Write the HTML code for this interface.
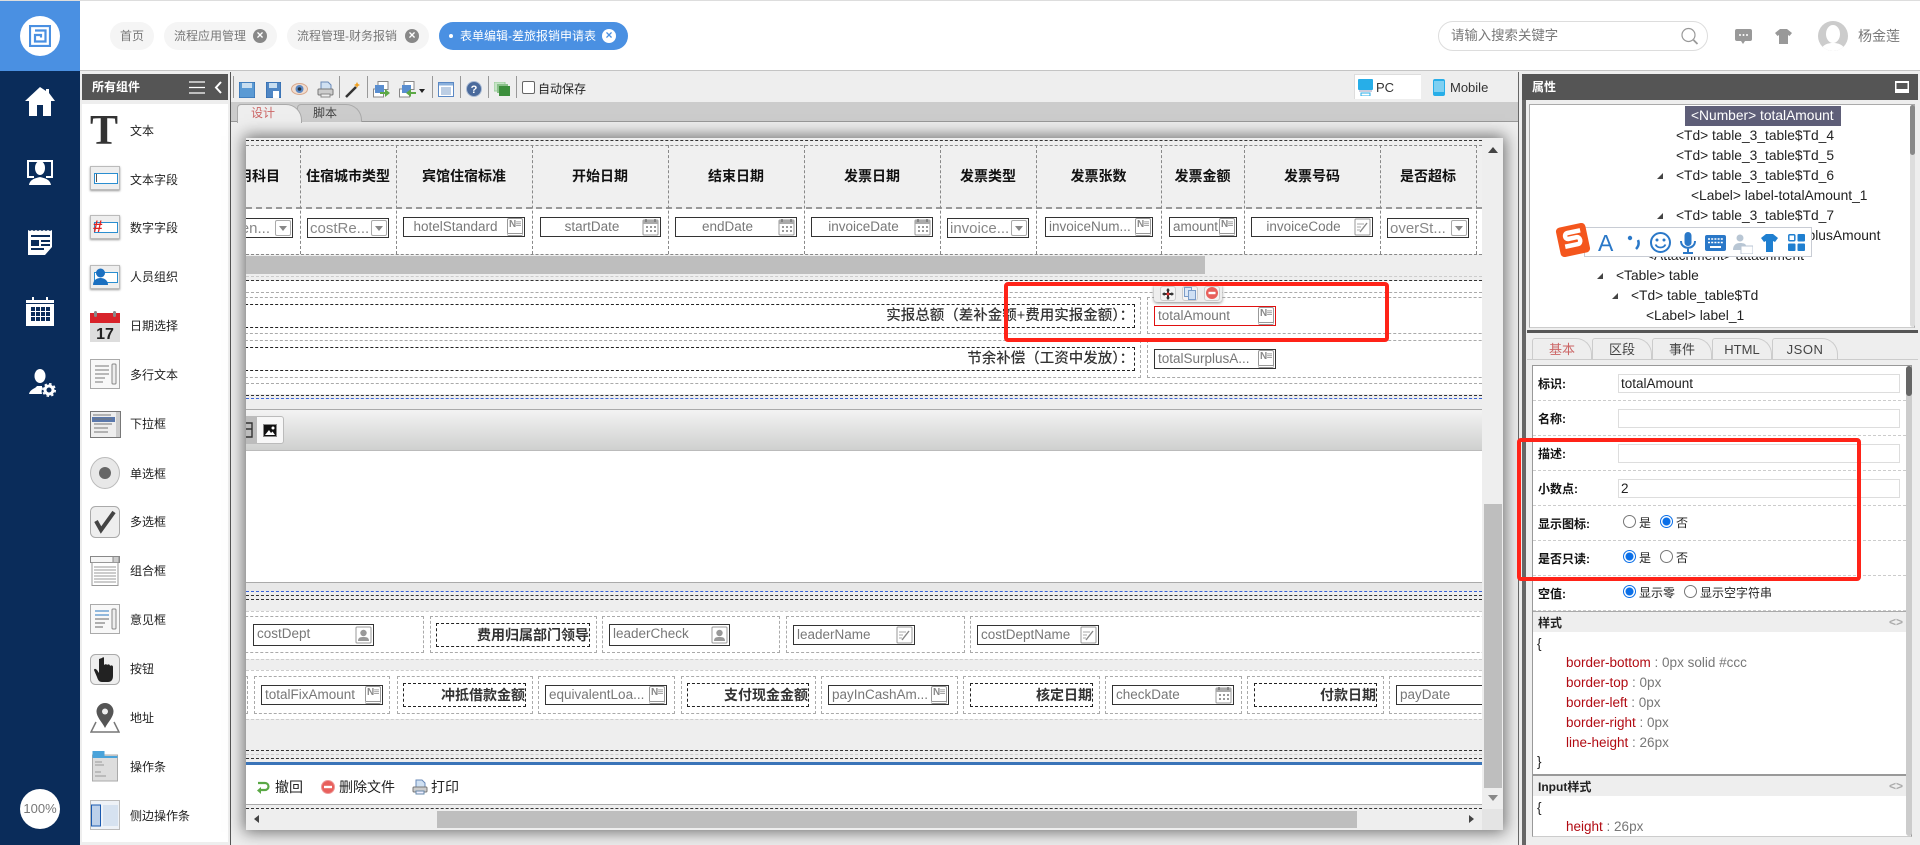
<!DOCTYPE html>
<html lang="zh"><head><meta charset="utf-8"><title>表单编辑</title>
<style>
*{box-sizing:border-box}
html,body{margin:0;padding:0}
body{width:1920px;height:845px;overflow:hidden;background:#eee;position:relative;font-family:"Liberation Sans","Noto Sans CJK SC",sans-serif;font-size:12px;color:#333}
div,span,svg,i,b{position:absolute}
i,b{font-style:normal}
span.r{position:static}
.tab{top:22px;height:28px;background:#f5f5f5;border-radius:14px;color:#777;line-height:28px;font-size:12px;white-space:nowrap}
.x{top:7px;width:14px;height:14px;border-radius:50%;background:#888;color:#fff;font-size:12px;font-weight:bold;line-height:13px;text-align:center}
.li{left:130px;font-size:12px;color:#222;line-height:16px;white-space:nowrap}
.ic{left:90px}
.hd{top:145px;height:63px;line-height:63px;text-align:center;font-weight:bold;font-size:14px;color:#111;white-space:nowrap}
.v{top:145px;height:109px;width:0;border-left:1px dashed #888}
.h{left:246px;width:1236px;height:0;border-top:1px dashed #333}
.g{border-top-color:#aaa}.l{border-top-color:#ccc}.b{border-top-color:#3a63d8}
.t{border:1px dashed #aaa;background:#fff}
.lb{border:1px dashed #222;background:#fff;text-align:right;font-weight:bold;font-size:14px;color:#333;white-space:nowrap;overflow:hidden}
.w{font-size:14.5px;font-weight:500}
.fi{border:1px solid #333;background:#fff;color:#777;font-size:13.5px;line-height:17px;white-space:nowrap;overflow:hidden;padding-left:3px;height:20px}
.c{text-align:center;padding-right:20px}
.sel{font-size:15px;top:218px;height:20px;line-height:19px;padding-left:2px;color:#888}
.sb{right:1px;top:1px;width:16px;height:16px;border:1px solid #aaa;border-radius:2px;background:#fff}
.sb:after{content:"";position:absolute;left:3px;top:5px;border:4px solid transparent;border-top:5px solid #888}
.ne{right:1px;top:0;width:16px;height:18px;border:1px solid #999;border-radius:2px;background:#fff;color:#888;font-size:10px;line-height:12px;text-align:left;padding-left:1px;letter-spacing:-.6px;font-weight:bold;border-bottom:3px double #999;overflow:hidden}
.ci{right:1px;top:0;width:17px;height:18px}
.tr{font-size:13.8px;line-height:20px;white-space:nowrap;color:#222}
.ar{width:6px;height:6px;background:#444;clip-path:polygon(100% 0,100% 100%,0 100%)}
.ptab{top:338px;height:21px;width:60px;border:1px solid #ccc;border-bottom:none;border-radius:3px 16px 0 0;background:#eee;text-align:center;line-height:21px;font-size:13px;color:#444}
.pl{left:1538px;font-weight:bold;font-size:12px;line-height:16px;color:#111;white-space:nowrap;margin-top:1px}
.pi{left:1618px;width:282px;height:19px;border:1px solid #ddd;background:#fff;font-size:13.5px;line-height:17px;padding-left:2px;color:#222}
.pd{left:1533px;width:373px;height:0;border-top:1px dashed #ccc}
.rd{width:13px;height:13px;border-radius:50%;border:1px solid #777;background:#fff}
.rd.on{border:1px solid #0a6fe8;background:radial-gradient(circle,#0a6fe8 0,#0a6fe8 3.6px,#fff 4.4px)}
.rt{font-size:12px;line-height:16px;color:#222;white-space:nowrap}
.cd{left:1566px;font-size:13.5px;line-height:20px;color:#b10a12;white-space:nowrap}
.cd em{font-style:normal;color:#777}
.br{left:1537px;font-size:13.5px;line-height:20px;color:#222}
.sp{top:76px;height:22px;width:1px;background:#999}
.rb{border:4px solid #ff2318;border-radius:4px;z-index:30}
</style></head><body>
<svg width="0" height="0" style="position:absolute"><defs>
<symbol id="cal" viewBox="0 0 17 18"><rect x="1" y="2" width="15" height="15" rx="1" fill="#fff" stroke="#999"/><rect x="1" y="2" width="15" height="4" fill="#aaa"/><path d="M4 1v3M13 1v3" stroke="#777" stroke-width="1.5"/><path d="M4 8h2v2H4zM8 8h2v2H8zM12 8h2v2h-2zM4 12h2v2H4zM8 12h2v2H8zM12 12h2v2h-2z" fill="#999"/></symbol>
<symbol id="ed" viewBox="0 0 17 18"><rect x="1" y="1" width="15" height="16" rx="1" fill="#fff" stroke="#999"/><path d="M3 6h7M3 9h4M3 12h3" stroke="#aaa"/><path d="M6 14l7-9" stroke="#888" stroke-width="1.4"/></symbol>
<symbol id="us" viewBox="0 0 17 18"><rect x="1" y="1" width="15" height="16" rx="1" fill="#fff" stroke="#999"/><circle cx="8.5" cy="7" r="3.2" fill="#999"/><path d="M3 15c0-4 3-4 5.5-4s5.500 0 5.500 4z" fill="#999"/></symbol>
</defs></svg>

<!-- top header -->
<div style="left:0;top:0;width:1920px;height:1px;background:#ddd"></div>
<div style="left:80px;top:1px;width:1840px;height:70px;background:#fff;border-bottom:1px solid #c4c4c4"></div>
<div class="tab" style="left:110px;width:44px;text-align:center">首页</div>
<div class="tab" style="left:164px;width:113px;padding-left:10px">流程应用管理<i class="x" style="right:10px">×</i></div>
<div class="tab" style="left:287px;width:142px;padding-left:10px">流程管理-财务报销<i class="x" style="right:10px">×</i></div>
<div class="tab" style="left:439px;width:189px;padding-left:21px;background:#4a90e2;color:#fff">表单编辑-差旅报销申请表<i style="left:10px;top:12px;width:4px;height:4px;background:#fff;border-radius:50%"></i><i class="x" style="right:12px;background:#fff;color:#4a90e2">×</i></div>
<div style="left:1438px;top:21px;width:270px;height:30px;border:1px solid #ddd;border-radius:15px;background:#fff;color:#777;font-size:13.4px;line-height:27px;padding-left:12px">请输入搜索关键字</div>
<svg style="left:1680px;top:27px" width="20" height="19" viewBox="0 0 20 19"><circle cx="8.500" cy="8" r="6.500" fill="none" stroke="#999" stroke-width="1.2"/><path d="M13.500 13l4 4" stroke="#999" stroke-width="1.8"/></svg>
<svg style="left:1735px;top:29px" width="17" height="15" viewBox="0 0 17 15"><path d="M2 0h13a2 2 0 0 1 2 2v8a2 2 0 0 1-2 2H10l-2 3-2-3H2a2 2 0 0 1-2-2V2a2 2 0 0 1 2-2z" fill="#999"/><circle cx="5" cy="6" r="1" fill="#fff"/><circle cx="8.500" cy="6" r="1" fill="#fff"/><circle cx="12" cy="6" r="1" fill="#fff"/></svg>
<svg style="left:1775px;top:29px" width="17" height="15" viewBox="0 0 17 15"><path d="M5 0h7l5 4-2.500 3L13 6v9H4V6L2.500 7 0 4z" fill="#999"/></svg>
<div style="left:1818px;top:21px;width:30px;height:30px;border-radius:50%;background:#ccc;overflow:hidden"><svg width="30" height="30" viewBox="0 0 30 30"><ellipse cx="15" cy="13" rx="7" ry="9" fill="#fff"/><path d="M3 30c1-7 8-8 12-8s11 1 12 8z" fill="#fff"/></svg></div>
<div style="left:1858px;top:27px;font-size:14px;line-height:18px;color:#777">杨金莲</div>

<!-- left nav -->
<div style="left:0;top:71px;width:80px;height:774px;background:#0a2c5a"></div>
<div style="left:0;top:1px;width:80px;height:70px;background:#4a90e2"></div>
<div style="left:20px;top:16px;width:40px;height:40px;border-radius:50%;background:#fff"></div>
<svg style="left:29px;top:25px" width="22" height="22" viewBox="0 0 22 22"><path d="M1 1h20v20H1z" fill="none" stroke="#4a90e2" stroke-width="2.200"/><path d="M6 5.500h10.500v11H6V10h6v2.500" fill="none" stroke="#4a90e2" stroke-width="2.200"/></svg>
<svg style="left:25px;top:87px" width="30" height="29" viewBox="0 0 30 29"><path d="M15 0L0 14h4v15h8V18h6v11h8V14h4L24 6V2h-3v2z" fill="#fff"/></svg>
<svg style="left:26px;top:159px" width="28" height="26" viewBox="0 0 28 26"><path d="M1 1h26v18H20v-2h5V3H3v14h5v2H1z" fill="#fff"/><ellipse cx="14" cy="9" rx="5" ry="7" fill="#fff"/><path d="M3 26c1-6 7-7 11-8 4 1 10 2 11 8z" fill="#fff"/></svg>
<svg style="left:28px;top:229px" width="25" height="26" viewBox="0 0 25 26"><path d="M0 1l2 1 2-1 2 1 2-1 2 1 2-1 2 1 2-1 2 1 2-1 2 1 2-1v17l-7 8H0z" fill="#fff"/><path d="M3 6h19v2H3z" fill="#0a2c5a"/><path d="M3 11h8v6H3z" fill="#0a2c5a"/><path d="M13 11h9v2h-9zM13 15h9v2h-9zM3 19h13v2H3z" fill="#0a2c5a"/></svg>
<svg style="left:26px;top:297px" width="28" height="29" viewBox="0 0 28 29"><path d="M0 3h28v26H0z" fill="#fff"/><path d="M6 0h2v5H6zM20 0h2v5h-2z" fill="#fff"/><path d="M0 6h28v1H0z" fill="#0a2c5a"/><path d="M5 10h4v4H5zM10 10h4v4h-4zM15 10h4v4h-4zM20 10h4v4h-4zM5 15h4v4H5zM10 15h4v4h-4zM15 15h4v4h-4zM20 15h4v4h-4zM5 20h4v4H5zM10 20h4v4h-4zM15 20h4v4h-4zM20 20h4v4h-4z" fill="#0a2c5a"/></svg>
<svg style="left:29px;top:369px" width="27" height="28" viewBox="0 0 27 28"><ellipse cx="11" cy="7" rx="5.500" ry="7" fill="#fff"/><path d="M0 25c1-5 6-5 8-8h5v3a8 8 0 0 0 0 5z" fill="#fff"/><circle cx="20" cy="21" r="4" fill="none" stroke="#fff" stroke-width="3"/><circle cx="20" cy="21" r="6.200" fill="none" stroke="#fff" stroke-width="1.600" stroke-dasharray="2.500 2.360"/></svg>
<div style="left:20px;top:789px;width:40px;height:40px;border-radius:50%;background:#fff;color:#777;font-size:13px;line-height:40px;text-align:center">100%</div>

<!-- component panel -->
<div style="left:82px;top:74px;width:146px;height:26px;background:#555;color:#fff;font-weight:bold;font-size:12px;line-height:26px;padding-left:10px">所有组件</div>
<svg style="left:189px;top:81px" width="34" height="13" viewBox="0 0 34 13"><path d="M0 1h16M0 6.500h16M0 12h16" stroke="#fff" stroke-width="1.300"/><path d="M32 1l-5 5.500 5 5.500" fill="none" stroke="#fff" stroke-width="2"/></svg>
<div style="left:82px;top:104px;width:146px;height:738px;background:#fff"></div>
<div style="left:230px;top:72px;width:1px;height:773px;background:#555"></div>

<div style="left:90px;top:110px;font:bold 42px/42px 'Liberation Serif',serif;color:#333">T</div>
<div class="li" style="top:123px">文本</div>
<div class="ic" style="top:166px;width:30px;height:24px;background:#eee;border:1px solid #bbb;box-shadow:0 1px 2px #999"><i style="left:3px;top:6px;width:24px;height:11px;background:#fff;border:1px solid #2a8ed0"></i><i style="left:5px;top:7px;width:1px;height:8px;background:#555"></i></div>
<div class="li" style="top:172px">文本字段</div>
<div class="ic" style="top:215px;width:30px;height:24px;background:#eee;border:1px solid #bbb;box-shadow:0 1px 2px #999"><i style="left:3px;top:6px;width:24px;height:11px;background:#fff;border:1px solid #2a8ed0"></i><i style="left:2px;top:1px;color:#d22;font:bold 17px/20px 'Liberation Sans',sans-serif">#</i></div>
<div class="li" style="top:220px">数字字段</div>
<div class="ic" style="top:265px;width:30px;height:24px;background:#eee;border:1px solid #bbb;box-shadow:0 1px 2px #999"><i style="left:3px;top:6px;width:24px;height:11px;background:#fff;border:1px solid #2a8ed0"></i><svg style="left:2px;top:2px" width="15" height="19" viewBox="0 0 15 19"><circle cx="7.500" cy="5" r="4.500" fill="#1a6fc0"/><path d="M0 17c0-5 4-7 7.500-7s7.500 2 7.500 7z" fill="#1a6fc0"/></svg></div>
<div class="li" style="top:269px">人员组织</div>
<svg class="ic" style="top:311px" width="30" height="31" viewBox="0 0 30 31"><rect y="2" width="30" height="29" fill="#ddd"/><rect y="2" width="30" height="10" fill="#d8232a"/><rect x="4" y="0" width="3" height="6" rx="1.500" fill="#888"/><rect x="23" y="0" width="3" height="6" rx="1.500" fill="#888"/><text x="15" y="28" font-family="Liberation Sans" font-weight="bold" font-size="16" fill="#222" text-anchor="middle">17</text></svg>
<div class="li" style="top:318px">日期选择</div>
<svg class="ic" style="top:359px" width="30" height="31" viewBox="0 0 30 31"><rect x=".5" y=".5" width="29" height="29" fill="#f8f8f8" stroke="#aaa"/><path d="M5 7h14M5 11h14M5 15h14M5 19h10M5 23h8" stroke="#777"/><rect x="22" y="5" width="4" height="20" rx="1" fill="#eee" stroke="#888"/></svg>
<div class="li" style="top:367px">多行文本</div>
<svg class="ic" style="top:411px" width="31" height="27" viewBox="0 0 31 27"><rect x=".5" y=".5" width="30" height="26" fill="#eee" stroke="#777"/><rect x="2" y="6" width="23" height="5" fill="#5a78ac"/><path d="M3 4h18M4 8h18M4 13h18M4 17h14M4 21h14" stroke="#777"/><rect x="26" y="1" width="4" height="25" fill="#ccc"/></svg>
<div class="li" style="top:416px">下拉框</div>
<svg class="ic" style="top:457px" width="30" height="32" viewBox="0 0 30 32"><ellipse cx="15" cy="16" rx="14.500" ry="15.500" fill="#e8e8e8" stroke="#bbb"/><circle cx="15" cy="16" r="6" fill="#666"/></svg>
<div class="li" style="top:466px">单选框</div>
<svg class="ic" style="top:506px" width="30" height="32" viewBox="0 0 30 32"><rect x=".5" y=".5" width="29" height="31" rx="5" fill="#eee" stroke="#aaa"/><path d="M6 15l5 9L24 6" fill="none" stroke="#444" stroke-width="4"/></svg>
<div class="li" style="top:514px">多选框</div>
<svg class="ic" style="top:556px" width="30" height="30" viewBox="0 0 30 30"><rect x=".5" y=".5" width="29" height="6" fill="#f6f6f6" stroke="#888"/><rect x="23" y=".5" width="6" height="6" fill="#ccc" stroke="#888"/><rect x="2" y="6.500" width="26" height="23" fill="#fff" stroke="#999"/><path d="M4 11h22M4 14h22M4 17h22M4 20h22M4 23h22M4 26h22" stroke="#999"/></svg>
<div class="li" style="top:563px">组合框</div>
<svg class="ic" style="top:604px" width="30" height="31" viewBox="0 0 30 31"><rect x=".5" y=".5" width="29" height="29" fill="#f8f8f8" stroke="#aaa"/><path d="M5 7h14M5 11h14" stroke="#2a78c0"/><path d="M5 15h14M5 19h10M5 23h8" stroke="#666"/><rect x="22" y="5" width="4" height="20" rx="1" fill="#eee" stroke="#888"/></svg>
<div class="li" style="top:612px">意见框</div>
<svg class="ic" style="top:654px" width="30" height="31" viewBox="0 0 30 31"><rect x=".5" y=".5" width="29" height="30" rx="5" fill="#eee" stroke="#aaa"/><path d="M12 4c1-1 2-1 2 0v7c1-1 3-1 3 0 1-1 3-1 3 1 1-1 3-1 3 1v9c0 4-2 6-5 6h-6c-3 0-4-2-5-5l-3-7c0-1 1-2 3 0l2 3V5z" fill="#222"/></svg>
<div class="li" style="top:661px">按钮</div>
<svg class="ic" style="top:703px" width="30" height="30" viewBox="0 0 30 30"><path d="M15 0a8.500 8.500 0 0 1 8.500 8.500C23.500 14 18 19 15 25c-3-6-8.500-11-8.500-16.500A8.500 8.500 0 0 1 15 0z" fill="#555"/><circle cx="15" cy="8.500" r="3" fill="#eee"/><path d="M6 19L1 29h28l-5-10" fill="none" stroke="#777" stroke-width="1.500"/></svg>
<div class="li" style="top:710px">地址</div>
<svg class="ic" style="top:751px;left:92px" width="26" height="31" viewBox="0 0 26 31"><rect x=".5" y="4" width="25" height="26" fill="#ddd" stroke="#aaa"/><rect x=".5" y="0" width="12" height="6" fill="#4aa3da"/><rect x=".5" y="5" width="25" height="2" fill="#4aa3da"/><path d="M3 11h7M3 14h9M3 21h6M3 25h11" stroke="#999"/></svg>
<div class="li" style="top:759px">操作条</div>
<svg class="ic" style="top:800px" width="30" height="31" viewBox="0 0 30 31"><rect x=".5" y=".5" width="29" height="29" fill="#eef2f7" stroke="#bbb"/><rect x="1.500" y="5" width="9" height="21" fill="#bcd0ea" stroke="#1a5ab0"/><rect x="13" y="5" width="15" height="21" fill="#d6e2f0"/></svg>
<div class="li" style="top:808px">侧边操作条</div>

<!-- toolbar -->
<div style="left:231px;top:72px;width:1287px;height:30px;background:#eee"></div>
<div class="sp" style="left:233px"></div><div class="sp" style="left:339px"></div><div class="sp" style="left:367px"></div><div class="sp" style="left:432px"></div><div class="sp" style="left:460px"></div><div class="sp" style="left:488px"></div><div class="sp" style="left:516px"></div>
<svg style="left:239px;top:82px" width="16" height="16" viewBox="0 0 16 16"><rect width="16" height="16" fill="#5a9ad4" stroke="#2a64a8"/><rect x="3" y="1" width="10" height="5" fill="#c8def0"/></svg>
<svg style="left:266px;top:82px" width="15" height="16" viewBox="0 0 15 16"><rect width="15" height="16" fill="#4f86c4" stroke="#2a64a8"/><rect x="3" y="1" width="8" height="5" fill="#c8def0"/><rect x="7" y="9" width="6" height="7" fill="#fff"/></svg>
<svg style="left:291px;top:83px" width="17" height="12" viewBox="0 0 17 12"><ellipse cx="8.500" cy="6" rx="8" ry="5.500" fill="#f0dccf" stroke="#d8a88c"/><circle cx="8.500" cy="6" r="4" fill="#5a88c4"/><circle cx="8.500" cy="6" r="1.800" fill="#234"/></svg>
<svg style="left:317px;top:81px" width="17" height="17" viewBox="0 0 17 17"><path d="M4 1h7l3 3v5H4z" fill="#cfe0f2" stroke="#6a8ab8"/><rect x="1" y="8" width="15" height="6" rx="1" fill="#ccc" stroke="#777"/><rect x="4" y="13" width="9" height="3" fill="#eee" stroke="#888"/></svg>
<svg style="left:345px;top:81px" width="16" height="17" viewBox="0 0 16 17"><path d="M1 16L11 6" stroke="#333" stroke-width="2.500"/><path d="M12 1l1 2 2 1-2 1-1 2-1-2-2-1 2-1z" fill="#f0a020"/></svg>
<svg style="left:373px;top:81px" width="17" height="17" viewBox="0 0 17 17"><rect x="5" y=".5" width="10" height="8" fill="#fff" stroke="#888"/><rect x=".5" y="8" width="10" height="8" fill="#fff" stroke="#888"/><rect x="2" y="4" width="9" height="8" fill="#5a8ed0"/><path d="M7 11h5V8l5 4-5 4v-3H7z" fill="#5ca845"/></svg>
<svg style="left:399px;top:81px" width="17" height="17" viewBox="0 0 17 17"><rect x="5" y=".5" width="10" height="8" fill="#fff" stroke="#888"/><rect x=".5" y="8" width="10" height="8" fill="#fff" stroke="#888"/><rect x="3" y="4" width="9" height="8" fill="#5a8ed0"/><path d="M17 11h-5V8l-5 4 5 4v-3h5z" fill="#5ca845"/></svg>
<div style="left:419px;top:89px;border:3px solid transparent;border-top:4px solid #222"></div>
<svg style="left:438px;top:82px" width="16" height="15" viewBox="0 0 16 15"><rect x=".5" y=".5" width="15" height="14" fill="#fff" stroke="#5a88c4"/><rect x="1" y="1" width="14" height="2.500" fill="#8ab0dc"/><path d="M3 6h10M3 8h10M3 10h10M3 12h10" stroke="#7a9cc8"/></svg>
<svg style="left:466px;top:81px" width="16" height="16" viewBox="0 0 16 16"><circle cx="8" cy="8" r="7.500" fill="#4a6a9c" stroke="#aabbd4"/><text x="8" y="12" font-family="Liberation Sans" font-weight="bold" font-size="11" fill="#fff" text-anchor="middle">?</text></svg>
<svg style="left:494px;top:82px" width="16" height="14" viewBox="0 0 16 14"><rect width="11" height="9" fill="#c6e4c6" stroke="#9c9"/><rect x="3" y="2" width="11" height="9" fill="#8ac08a"/><rect x="5" y="4" width="11" height="10" fill="#3d8f3d"/></svg>
<div style="left:522px;top:81px;width:13px;height:13px;background:#fff;border:1px solid #666;border-radius:2px"></div>
<div style="left:538px;top:81px;font-size:12px;line-height:16px;color:#222">自动保存</div>
<div style="left:1354px;top:74px;width:67px;height:25px;background:#fff;border:1px solid #ddd;border-right:none;border-bottom:none"></div>
<svg style="left:1358px;top:79px" width="15" height="17" viewBox="0 0 15 17"><rect width="15" height="11" rx="1" fill="#27aee8"/><rect x="1" y="11" width="13" height="2" fill="#ccd"/><rect x="3" y="14" width="9" height="3" fill="none" stroke="#27aee8"/></svg>
<div style="left:1376px;top:79px;font-size:13px;line-height:17px;color:#333">PC</div>
<svg style="left:1433px;top:79px" width="12" height="17" viewBox="0 0 12 17"><rect width="12" height="17" rx="2" fill="#27aee8"/><rect x="1" y="2" width="10" height="11" fill="#7ed0f2"/></svg>
<div style="left:1450px;top:79px;font-size:13px;line-height:17px;color:#333">Mobile</div>

<!-- design tabs -->
<div style="left:231px;top:102px;width:1287px;height:20px;background:#ccc;border-bottom:1px solid #999"></div>
<div style="left:297px;top:104px;width:65px;height:18px;background:#ccc;border:1px solid #aaa;border-bottom:none;border-radius:4px 16px 0 0;padding-left:15px;line-height:17px;color:#444">脚本</div>
<div style="left:237px;top:104px;width:65px;height:19px;background:#eee;border:1px solid #aaa;border-bottom:none;border-radius:4px 16px 0 0;padding-left:13px;line-height:17px;color:#c66">设计</div>
<div style="left:1518px;top:72px;width:1px;height:773px;background:#666"></div>

<!-- canvas -->
<div style="left:246px;top:138px;width:1257px;height:692px;background:#eee;box-shadow:0 0 15px 2px rgba(0,0,0,.55)"></div>
<div style="left:0;top:0;width:1920px;height:845px;clip-path:inset(138px 438px 15px 246px)">
 <div class="h" style="top:140px"></div>
 <div style="left:246px;top:145px;width:1236px;height:63px;background:#f0f0f0"></div>
 <div style="left:246px;top:209px;width:1236px;height:45px;background:#fff"></div>
 <div class="h g" style="top:145px;border-top:1px dashed #888"></div>
 <div class="h g" style="top:207px;border-top:2px dashed #999"></div>
 <div class="h" style="top:254px;border-top:1px dashed #888"></div>
 <div class="hd" style="left:204px;width:96px">费用科目</div>
 <div class="hd" style="left:300px;width:96px">住宿城市类型</div>
 <div class="hd" style="left:396px;width:136px">宾馆住宿标准</div>
 <div class="hd" style="left:532px;width:136px">开始日期</div>
 <div class="hd" style="left:668px;width:136px">结束日期</div>
 <div class="hd" style="left:804px;width:136px">发票日期</div>
 <div class="hd" style="left:940px;width:96px">发票类型</div>
 <div class="hd" style="left:1036px;width:125px">发票张数</div>
 <div class="hd" style="left:1161px;width:83px">发票金额</div>
 <div class="hd" style="left:1244px;width:136px">发票号码</div>
 <div class="hd" style="left:1380px;width:96px">是否超标</div>
 <div class="v" style="left:300px"></div><div class="v" style="left:396px"></div><div class="v" style="left:532px"></div><div class="v" style="left:668px"></div><div class="v" style="left:804px"></div><div class="v" style="left:940px"></div><div class="v" style="left:1036px"></div><div class="v" style="left:1161px"></div><div class="v" style="left:1244px"></div><div class="v" style="left:1380px"></div><div class="v" style="left:1476px"></div>
 <div class="fi sel" style="left:200px;width:93px;padding-left:0;text-align:right;padding-right:22px">costen...<i class="sb"></i></div>
 <div class="fi sel" style="left:307px;width:82px">costRe...<i class="sb"></i></div>
 <div class="fi c" style="left:403px;width:122px;top:217px">hotelStandard<i class="ne">N≡</i></div>
 <div class="fi c" style="left:540px;width:121px;top:217px">startDate<svg class="ci"><use href="#cal"/></svg></div>
 <div class="fi c" style="left:675px;width:122px;top:217px">endDate<svg class="ci"><use href="#cal"/></svg></div>
 <div class="fi c" style="left:811px;width:122px;top:217px">invoiceDate<svg class="ci"><use href="#cal"/></svg></div>
 <div class="fi sel" style="left:947px;width:82px">invoice...<i class="sb"></i></div>
 <div class="fi" style="left:1045px;width:108px;top:217px">invoiceNum...<i class="ne">N≡</i></div>
 <div class="fi" style="left:1169px;width:68px;top:217px">amount<i class="ne">N≡</i></div>
 <div class="fi c" style="left:1251px;width:122px;top:217px">invoiceCode<svg class="ci"><use href="#ed"/></svg></div>
 <div class="fi sel" style="left:1387px;width:82px">overSt...<i class="sb"></i></div>
 <!-- horizontal scrollbar of table -->
 <div style="left:246px;top:256px;width:959px;height:18px;background:#bebebe"></div>
 <div class="h l" style="top:276px"></div>
 <div class="h" style="top:280px"></div>
 <div style="left:246px;top:281px;width:1236px;height:113px;background:#fff"></div>
 <div class="h g" style="top:292px"></div>
 <div class="t" style="left:200px;top:297px;width:941px;height:37px"></div>
 <div class="t" style="left:1147px;top:297px;width:400px;height:37px"></div>
 <div class="lb w" style="left:200px;top:304px;width:935px;height:24px;line-height:22px">实报总额（差补金额+费用实报金额）：</div>
 <div class="fi" style="left:1154px;top:306px;width:122px;border-color:#e01010">totalAmount<i class="ne">N≡</i></div>
 <div style="left:1154px;top:285px;width:68px;height:17px;background:#eee;box-shadow:0 1px 3px #888;border-radius:0 0 3px 3px"></div>
 <div style="left:1160px;top:286px;width:16px;height:15px;background:#f4f4f4;border:1px solid #ccc;border-radius:3px"></div>
 <svg style="left:1162px;top:288px" width="12" height="12" viewBox="0 0 12 12"><path d="M6 0l2 2.500H7v2.500h2.500V4L12 6 9.500 8V7H7v2.500h1L6 12 4 9.500h1V7H2.500v1L0 6l2.500-2v1H5V2.500H4z" fill="#333"/><circle cx="6" cy="6" r="1.500" fill="#e33"/></svg>
 <div style="left:1182px;top:286px;width:16px;height:15px;background:#f4f4f4;border:1px solid #ccc;border-radius:3px"></div>
 <svg style="left:1184px;top:287px" width="12" height="13" viewBox="0 0 12 13"><rect x=".5" y=".5" width="7" height="9" fill="#dde8f6" stroke="#7a9cc8"/><rect x="4.500" y="3.500" width="7" height="9" fill="#cfe0f4" stroke="#7a9cc8"/></svg>
 <div style="left:1204px;top:286px;width:16px;height:15px;background:#f4f4f4;border:1px solid #ccc;border-radius:3px"></div>
 <svg style="left:1206px;top:287px" width="12" height="12" viewBox="0 0 12 12"><circle cx="6" cy="6" r="6" fill="#e8605c"/><rect x="2.500" y="4.800" width="7" height="2.400" fill="#fff"/></svg>
 <div class="t" style="left:200px;top:340px;width:941px;height:38px"></div>
 <div class="t" style="left:1147px;top:340px;width:400px;height:38px"></div>
 <div class="lb w" style="left:200px;top:347px;width:935px;height:24px;line-height:22px">节余补偿（工资中发放）：</div>
 <div class="fi" style="left:1154px;top:349px;width:122px">totalSurplusA...<i class="ne">N≡</i></div>
 <div class="h g" style="top:383px"></div>
 <div class="h" style="top:395px"></div>
 <div class="h b" style="top:398px"></div>
 <div style="left:246px;top:409px;width:1236px;height:42px;background:linear-gradient(#f3f3f3,#cfd0cf);border-top:1px solid #aaa;border-bottom:1px solid #bbb"></div>
 <div style="left:230px;top:416px;width:54px;height:28px;background:#f7f7f7;border:1px solid #bbb;border-radius:3px"></div>
 <div style="left:230px;top:416px;width:27px;height:28px;background:#bcbcbc"></div>
 <svg style="left:246px;top:422px" width="8" height="16" viewBox="0 0 8 16"><path d="M0 1h6v6H0M6 7v8H0" fill="none" stroke="#333" stroke-width="1.400"/></svg>
 <svg style="left:263px;top:424px" width="14" height="13" viewBox="0 0 14 13"><rect x=".5" y=".5" width="13" height="12" fill="#111" stroke="#888"/><path d="M2 11l4-5 2 3 1.500-1.500L12 11z" fill="#fff"/><circle cx="10" cy="4" r="1.500" fill="#fff"/></svg>
 <div style="left:246px;top:451px;width:1236px;height:131px;background:#fff"></div>
 <div style="left:246px;top:582px;width:1236px;height:1px;background:#aaa"></div>
 <div style="left:246px;top:583px;width:1236px;height:8px;background:#e8e8e8"></div>
 <div class="h b" style="top:591px"></div>
 <div class="h" style="top:595px"></div>
 <div class="h" style="top:599px"></div>
 <div style="left:246px;top:611px;width:1236px;height:48px;background:#fff"></div>
 <div style="left:246px;top:670px;width:1236px;height:49px;background:#fff"></div>
 <div class="h l" style="top:611px"></div>
 <div class="h l" style="top:659px"></div>
 <div class="h l" style="top:670px"></div>
 <div class="h l" style="top:719px"></div>
 <div class="t" style="left:200px;top:616px;width:224px;height:37px"></div>
 <div class="t" style="left:430px;top:616px;width:167px;height:37px"></div>
 <div class="t" style="left:602px;top:616px;width:178px;height:37px"></div>
 <div class="t" style="left:786px;top:616px;width:179px;height:37px"></div>
 <div class="t" style="left:970px;top:616px;width:620px;height:37px"></div>
 <div class="fi" style="left:253px;top:624px;width:121px;height:22px">costDept<svg class="ci" style="top:1px"><use href="#us"/></svg></div>
 <div class="lb" style="left:436px;top:623px;width:154px;height:24px;line-height:22px">费用归属部门领导</div>
 <div class="fi" style="left:609px;top:624px;width:121px;height:22px">leaderCheck<svg class="ci" style="top:1px"><use href="#us"/></svg></div>
 <div class="fi" style="left:793px;top:625px;width:122px">leaderName<svg class="ci"><use href="#ed"/></svg></div>
 <div class="fi" style="left:977px;top:625px;width:122px">costDeptName<svg class="ci"><use href="#ed"/></svg></div>
 <div class="t" style="left:200px;top:676px;width:48px;height:38px"></div>
 <div class="t" style="left:254px;top:676px;width:136px;height:38px"></div>
 <div class="t" style="left:397px;top:676px;width:136px;height:38px"></div>
 <div class="t" style="left:538px;top:676px;width:137px;height:38px"></div>
 <div class="t" style="left:681px;top:676px;width:135px;height:38px"></div>
 <div class="t" style="left:821px;top:676px;width:137px;height:38px"></div>
 <div class="t" style="left:963px;top:676px;width:137px;height:38px"></div>
 <div class="t" style="left:1105px;top:676px;width:137px;height:38px"></div>
 <div class="t" style="left:1247px;top:676px;width:137px;height:38px"></div>
 <div class="t" style="left:1389px;top:676px;width:137px;height:38px"></div>
 <div class="fi" style="left:261px;top:685px;width:122px">totalFixAmount<i class="ne">N≡</i></div>
 <div class="lb" style="left:403px;top:683px;width:123px;height:24px;line-height:22px">冲抵借款金额</div>
 <div class="fi" style="left:545px;top:685px;width:122px">equivalentLoa...<i class="ne">N≡</i></div>
 <div class="lb" style="left:687px;top:683px;width:122px;height:24px;line-height:22px">支付现金金额</div>
 <div class="fi" style="left:828px;top:685px;width:121px">payInCashAm...<i class="ne">N≡</i></div>
 <div class="lb" style="left:970px;top:683px;width:123px;height:24px;line-height:22px">核定日期</div>
 <div class="fi" style="left:1112px;top:685px;width:122px">checkDate<svg class="ci"><use href="#cal"/></svg></div>
 <div class="lb" style="left:1254px;top:683px;width:123px;height:24px;line-height:22px">付款日期</div>
 <div class="fi" style="left:1396px;top:685px;width:122px">payDate</div>
 <div class="h" style="top:750px"></div>
 <div class="h l" style="top:754px"></div>
 <div class="h" style="top:758px"></div>
 <div style="left:246px;top:762px;width:1236px;height:3px;background:#3a74b8"></div>
 <div style="left:246px;top:765px;width:1236px;height:39px;background:#fff"></div>
 <svg style="left:257px;top:781px" width="13" height="13" viewBox="0 0 13 13"><path d="M1 2h7a3.500 3.500 0 0 1 0 7H3" fill="none" stroke="#5aa845" stroke-width="2.200"/><path d="M4 6L0 9.500 4 13z" fill="#5aa845"/></svg>
 <div style="left:275px;top:778px;font-size:14px;line-height:18px;color:#222">撤回</div>
 <svg style="left:321px;top:780px" width="14" height="14" viewBox="0 0 14 14"><circle cx="7" cy="7" r="6.500" fill="#e8605c" stroke="#e99"/><rect x="3" y="5.800" width="8" height="2.400" fill="#fff"/></svg>
 <div style="left:339px;top:778px;font-size:14px;line-height:18px;color:#222">删除文件</div>
 <svg style="left:412px;top:779px" width="16" height="16" viewBox="0 0 16 16"><path d="M4 1h6l3 3v5H4z" fill="#cfe0f2" stroke="#6a8ab8"/><rect x="1" y="8" width="14" height="5" rx="1" fill="#ccc" stroke="#777"/><rect x="4" y="12" width="8" height="3" fill="#eef" stroke="#68a"/></svg>
 <div style="left:431px;top:778px;font-size:14px;line-height:18px;color:#222">打印</div>
 <div style="left:246px;top:804px;width:1236px;height:1px;background:#aaa"></div>
 <div class="h" style="top:808px"></div>
 <div style="left:437px;top:811px;width:920px;height:17px;background:#bebebe"></div>
 <div style="left:254px;top:815px;border:4px solid transparent;border-right:5px solid #444;border-left:none"></div>
 <div style="left:1469px;top:815px;border:4px solid transparent;border-left:5px solid #444;border-right:none"></div>
</div>
<!-- vertical scrollbar -->
<div style="left:1484px;top:504px;width:18px;height:284px;background:#bebebe"></div>
<div style="left:1488px;top:147px;border:5px solid transparent;border-bottom:6px solid #444;border-top:none"></div>
<div style="left:1488px;top:795px;border:5px solid transparent;border-top:6px solid #888;border-bottom:none"></div>
<div style="left:1482px;top:809px;width:21px;height:21px;background:#e4e4e4"></div>

<!-- right panel -->
<div style="left:1522px;top:74px;width:396px;height:26px;background:#555;color:#fff;font-weight:bold;font-size:12px;line-height:26px;padding-left:10px">属性</div>
<svg style="left:1895px;top:81px" width="14" height="12" viewBox="0 0 14 12"><rect width="14" height="12" fill="#fff"/><rect x="1.500" y="2" width="11" height="6" fill="#555"/></svg>
<div style="left:1522px;top:100px;width:4px;height:745px;background:#666"></div>
<div style="left:1529px;top:104px;width:386px;height:224px;background:#fff;border:1px solid #aaa;border-bottom-color:#ccc"></div>
<div style="left:1910px;top:105px;width:5px;height:222px;background:#ddd;border-radius:3px"></div>
<div style="left:1910px;top:105px;width:5px;height:50px;background:#888;border-radius:3px"></div>
<div style="left:1685px;top:106px;width:156px;height:20px;background:#5e5e78"></div>
<div class="tr" style="left:1691px;top:106px;color:#fff">&lt;Number&gt; totalAmount</div>
<div class="tr" style="left:1676px;top:126px">&lt;Td&gt; table_3_table$Td_4</div>
<div class="tr" style="left:1676px;top:146px">&lt;Td&gt; table_3_table$Td_5</div>
<div class="ar" style="left:1657px;top:173px"></div>
<div class="tr" style="left:1676px;top:166px">&lt;Td&gt; table_3_table$Td_6</div>
<div class="tr" style="left:1691px;top:186px">&lt;Label&gt; label-totalAmount_1</div>
<div class="ar" style="left:1657px;top:213px"></div>
<div class="tr" style="left:1676px;top:206px">&lt;Td&gt; table_3_table$Td_7</div>
<div class="tr" style="left:1691px;top:226px">&lt;Number&gt; totalSurplusAmount</div>
<div class="tr" style="left:1646px;top:246px">&lt;Attachment&gt; attachment</div>
<div class="ar" style="left:1597px;top:273px"></div>
<div class="tr" style="left:1616px;top:266px">&lt;Table&gt; table</div>
<div class="ar" style="left:1612px;top:293px"></div>
<div class="tr" style="left:1631px;top:286px">&lt;Td&gt; table_table$Td</div>
<div class="tr" style="left:1646px;top:306px">&lt;Label&gt; label_1</div>

<!-- IME bar -->
<div style="left:1584px;top:227px;width:228px;height:30px;background:#fff;border:1px solid #c8ccd4;z-index:20"></div>
<svg style="left:1555px;top:222px;z-index:21" width="36" height="36" viewBox="0 0 36 36"><rect x="3" y="3" width="30" height="30" rx="4" fill="#f4561d" transform="rotate(-12 18 18)"/><path d="M27 10H14c-4 0-4 6 0 6h8c4 0 4 7 0 7H9" fill="none" stroke="#fff" stroke-width="4.500" transform="rotate(-12 18 18)"/></svg>
<div style="left:1598px;top:231px;z-index:21;font:23px/24px 'Liberation Sans',sans-serif;color:#2a78c8">A</div>
<svg style="left:1627px;top:235px;z-index:21" width="14" height="15" viewBox="0 0 14 15"><circle cx="3" cy="3" r="2.200" fill="#2a78c8"/><path d="M11 5c1.500 4 0 7-2 9" fill="none" stroke="#2a78c8" stroke-width="2.500"/></svg>
<svg style="left:1650px;top:232px;z-index:21" width="21" height="21" viewBox="0 0 21 21"><circle cx="10.500" cy="10.500" r="9.500" fill="none" stroke="#2a78c8" stroke-width="2"/><circle cx="7" cy="8" r="1.500" fill="#2a78c8"/><circle cx="14" cy="8" r="1.500" fill="#2a78c8"/><path d="M5.500 12.500c2 4 8 4 10 0" fill="none" stroke="#2a78c8" stroke-width="1.800"/></svg>
<svg style="left:1680px;top:232px;z-index:21" width="16" height="22" viewBox="0 0 16 22"><rect x="4.500" y="0" width="7" height="14" rx="3.500" fill="#2a78c8"/><path d="M1 9c0 9 14 9 14 0M8 16v4M3 21h10" fill="none" stroke="#2a78c8" stroke-width="2"/></svg>
<svg style="left:1705px;top:235px;z-index:21" width="21" height="16" viewBox="0 0 21 16"><rect width="21" height="16" rx="2" fill="#2a78c8"/><path d="M3 4h15M3 7.500h15" stroke="#fff" stroke-width="1.600" stroke-dasharray="2 1.200"/><rect x="5" y="11" width="11" height="2" fill="#fff"/></svg>
<svg style="left:1733px;top:234px;z-index:21" width="20" height="20" viewBox="0 0 20 20"><circle cx="7" cy="4" r="3.500" fill="#b8c6d4"/><path d="M0 16c0-5 3-7 7-7s6 1 6 3v4z" fill="#b8c6d4"/><rect x="8" y="12" width="12" height="8" fill="#fff" stroke="#b8c6d4"/></svg>
<svg style="left:1761px;top:234px;z-index:21" width="17" height="18" viewBox="0 0 17 18"><path d="M5 0h7l5 4-3 4-2-1v11H5V7L3 8 0 4z" fill="#1f7fd0"/></svg>
<svg style="left:1788px;top:234px;z-index:21" width="17" height="17" viewBox="0 0 17 17"><rect width="6" height="6" rx="1" fill="none" stroke="#1f7fd0" stroke-width="1.500" x=".8" y=".8"/><rect x="9.500" width="7.500" height="7.500" rx="1" fill="#1f7fd0"/><rect y="9.500" width="7.500" height="7.500" rx="1" fill="#1f7fd0"/><rect x="9.500" y="9.500" width="7.500" height="7.500" rx="1" fill="#1f7fd0"/></svg>

<!-- property tabs -->
<div style="left:1527px;top:330px;width:391px;height:3px;background:#555"></div>
<div style="left:1527px;top:359px;width:391px;height:1px;background:#ccc"></div>
<div class="ptab" style="left:1772px;width:66px;letter-spacing:.5px">JSON</div>
<div class="ptab" style="left:1712px">HTML</div>
<div class="ptab" style="left:1652px">事件</div>
<div class="ptab" style="left:1592px">区段</div>
<div class="ptab" style="left:1532px;color:#c66">基本</div>
<div style="left:1532px;top:365px;width:380px;height:472px;background:#fff;border:1px solid #999;border-bottom-color:#ccc;overflow:hidden"></div>
<div style="left:1906px;top:366px;width:6px;height:470px;background:#ccc;border-radius:3px"></div>
<div style="left:1906px;top:366px;width:6px;height:30px;background:#666;border-radius:3px"></div>
<div class="pd" style="top:400px"></div><div class="pd" style="top:435px"></div><div class="pd" style="top:470px"></div><div class="pd" style="top:505px"></div><div class="pd" style="top:540px"></div><div class="pd" style="top:575px"></div><div class="pd" style="top:610px"></div>
<div class="pl" style="top:375px">标识:</div><div class="pi" style="top:374px">totalAmount</div>
<div class="pl" style="top:410px">名称:</div><div class="pi" style="top:409px"></div>
<div class="pl" style="top:445px">描述:</div><div class="pi" style="top:444px"></div>
<div class="pl" style="top:480px">小数点:</div><div class="pi" style="top:479px">2</div>
<div class="pl" style="top:515px">显示图标:</div>
<div class="rd" style="left:1623px;top:515px"></div><div class="rt" style="left:1639px;top:515px">是</div>
<div class="rd on" style="left:1660px;top:515px"></div><div class="rt" style="left:1676px;top:515px">否</div>
<div class="pl" style="top:550px">是否只读:</div>
<div class="rd on" style="left:1623px;top:550px"></div><div class="rt" style="left:1639px;top:550px">是</div>
<div class="rd" style="left:1660px;top:550px"></div><div class="rt" style="left:1676px;top:550px">否</div>
<div class="pl" style="top:585px">空值:</div>
<div class="rd on" style="left:1623px;top:585px"></div><div class="rt" style="left:1639px;top:585px">显示零</div>
<div class="rd" style="left:1684px;top:585px"></div><div class="rt" style="left:1700px;top:585px">显示空字符串</div>
<div style="left:1533px;top:611px;width:373px;height:21px;background:#eee;font-weight:bold;font-size:12px;line-height:22px;padding-left:5px;color:#222;border-top:1px solid #aaa">样式</div>
<div style="left:1889px;top:616px;font-size:12px;line-height:12px;color:#aaa;font-weight:bold">&lt;&gt;</div>
<div class="br" style="top:634px">{</div>
<div class="cd" style="top:653px">border-bottom<em> : 0px solid #ccc</em></div>
<div class="cd" style="top:673px">border-top<em> : 0px</em></div>
<div class="cd" style="top:693px">border-left<em> : 0px</em></div>
<div class="cd" style="top:713px">border-right<em> : 0px</em></div>
<div class="cd" style="top:733px">line-height<em> : 26px</em></div>
<div class="br" style="top:752px">}</div>
<div style="left:1533px;top:774px;width:373px;height:22px;background:#eee;font-weight:bold;font-size:12px;line-height:23px;padding-left:5px;color:#222;border-top:2px solid #999">Input样式</div>
<div style="left:1889px;top:780px;font-size:12px;line-height:12px;color:#aaa;font-weight:bold">&lt;&gt;</div>
<div class="br" style="top:798px">{</div>
<div class="cd" style="top:817px">height<em> : 26px</em></div>

<!-- red annotation boxes -->
<div class="rb" style="left:1004px;top:282px;width:385px;height:60px"></div>
<div class="rb" style="left:1517px;top:438px;width:344px;height:143px"></div>
</body></html>
